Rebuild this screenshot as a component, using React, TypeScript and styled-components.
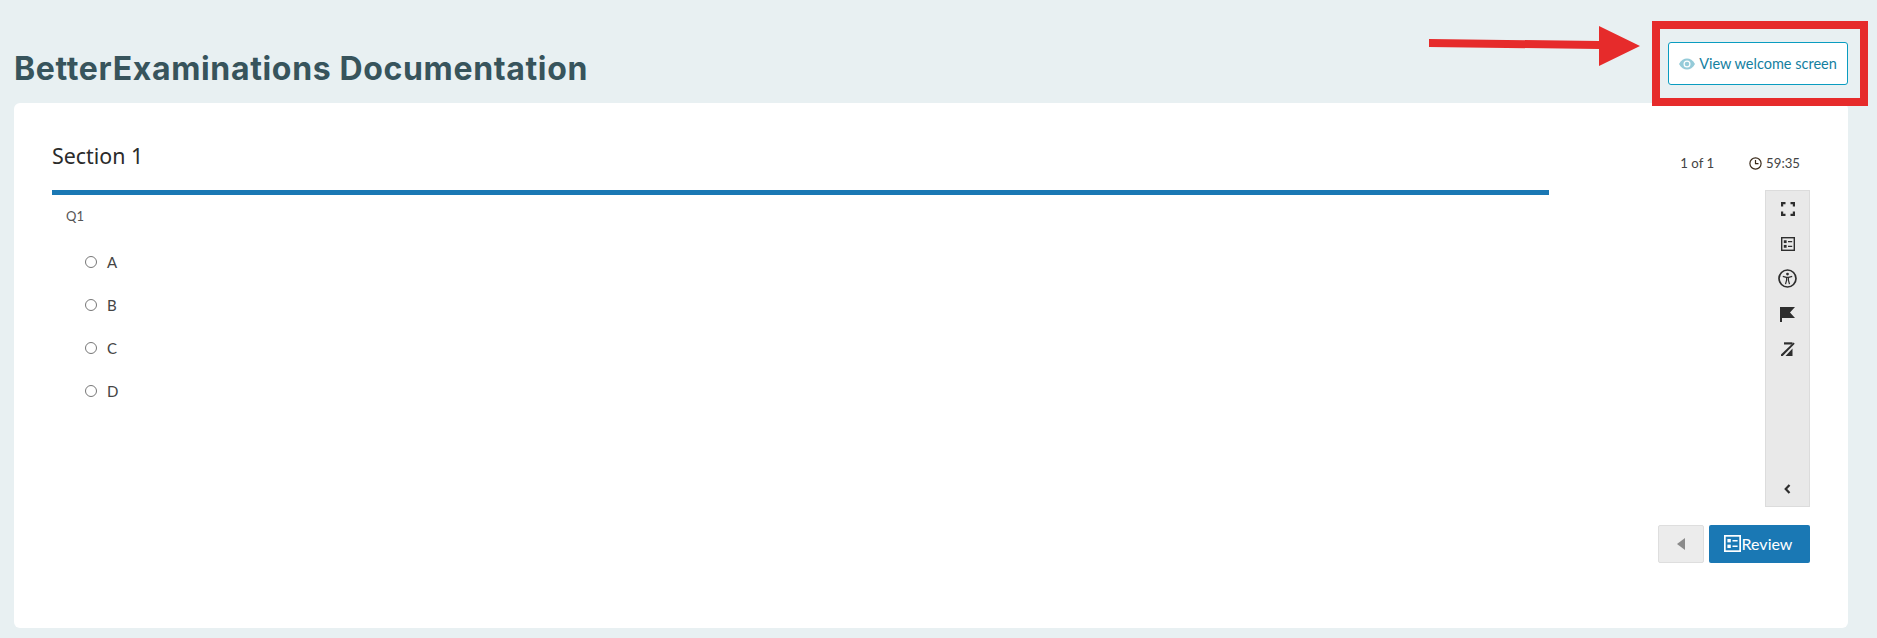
import React from 'react';
import styled, { createGlobalStyle } from 'styled-components';

// STYLES
const GlobalStyle = createGlobalStyle`
  html, body {
    margin: 0;
    padding: 0;
    background: #e8f0f2;
  }
  * {
    box-sizing: border-box;
  }
`;

const Page = styled.div`
  position: relative;
  width: 1877px;
  height: 638px;
  overflow: hidden;
  background: #e8f0f2;
  font-family: 'Lato', sans-serif;
  color: #444;
`;

const Header = styled.header`
  height: 103px;
  padding: 42px 29px 0 14px;
  display: flex;
  justify-content: space-between;
  align-items: flex-start;
`;

const Title = styled.h1`
  margin: 9px 0 0;
  font-family: 'Inter', sans-serif;
  font-size: 32px;
  line-height: 36px;
  font-weight: 700;
  letter-spacing: 0.65px;
  color: #37545c;
`;

const WelcomeButton = styled.button`
  width: 180px;
  height: 43px;
  display: flex;
  align-items: center;
  justify-content: center;
  gap: 4px;
  background: #fff;
  border: 1px solid #0a9cc0;
  border-radius: 3px;
  color: #14809f;
  font-family: 'Lato', sans-serif;
  font-size: 14.5px;
`;

const Card = styled.main`
  height: 525px;
  margin: 0 29px 0 14px;
  padding: 40px 38px 0;
  background: #fff;
  border-radius: 6px;
  display: flex;
  justify-content: space-between;
`;

const Exam = styled.section`
  width: 1497px;
`;

const SectionTitle = styled.h2`
  margin: 0;
  height: 52px;
  font-family: 'Noto Sans', sans-serif;
  font-size: 21.4px;
  line-height: 26px;
  font-weight: 400;
  color: #2b2b2b;
  border-bottom: 5px solid #1a78b4;
`;

const Question = styled.p`
  margin: 0;
  padding: 13px 0 0 14px;
  font-size: 13px;
  line-height: 16px;
  color: #555;
`;

const Options = styled.div`
  margin-top: 16px;
  padding-left: 33px;
  display: flex;
  flex-direction: column;
`;

const Option = styled.label`
  height: 43px;
  display: flex;
  align-items: center;
  gap: 9px;
  font-size: 15px;
`;

const Radio = styled.span`
  width: 12px;
  height: 12px;
  margin-right: 1px;
  border: 1px solid #777;
  border-radius: 50%;
`;

const Side = styled.aside`
  width: 145px;
  display: flex;
  flex-direction: column;
  align-items: flex-end;
`;

const Status = styled.div`
  height: 47px;
  padding-top: 12px;
  display: flex;
  align-items: flex-start;
  gap: 35px;
  font-size: 13.2px;
  line-height: 16px;
  margin-right: 10px;
`;

const Timer = styled.span`
  display: flex;
  align-items: center;
  gap: 4px;
`;

const Toolbar = styled.div`
  width: 45px;
  height: 317px;
  padding: 0 0 8px;
  display: flex;
  flex-direction: column;
  align-items: center;
  background: #e9e9e9;
  border: 1px solid #dcdcdc;
`;

const ToolSlot = styled.div`
  height: 35px;
  width: 100%;
  flex: none;
  display: flex;
  align-items: center;
  justify-content: center;
  color: #2e2e2e;
`;

const Collapse = styled(ToolSlot)`
  margin-top: auto;
  height: 20px;
  padding-top: 2px;
`;

const FlagSlot = styled(ToolSlot)`
  padding-top: 2px;
`;

const Nav = styled.div`
  margin-top: 18px;
  display: flex;
  gap: 5px;
`;

const BackButton = styled.button`
  width: 46px;
  height: 38px;
  display: flex;
  align-items: center;
  justify-content: center;
  padding: 0;
  background: #ececec;
  border: 1px solid #dedede;
  border-radius: 2px;
`;

const ReviewButton = styled.button`
  width: 101px;
  height: 38px;
  display: flex;
  align-items: center;
  justify-content: center;
  gap: 1px;
  padding: 0 3px 1px 0;
  background: #1a78b4;
  border: none;
  border-radius: 2px;
  color: #fff;
  font-family: 'Lato', sans-serif;
  font-size: 16px;
`;

// callout drawn over the screenshot
const CalloutBox = styled.div`
  position: absolute;
  left: 1652px;
  top: 21px;
  width: 216px;
  height: 85px;
  border: 8px solid #e62b2b;
`;

const CalloutArrow = styled.svg`
  position: absolute;
  left: 1428px;
  top: 24px;
`;

// ICONS
const EyeIcon = () => (
  <svg width="16" height="12" viewBox="0 0 16 12">
    <path d="M0 6C2 2.2 5 .5 8 .5S14 2.2 16 6c-2 3.8-5 5.5-8 5.5S2 9.800 0 6z" fill="#95cbd9" />
    <circle cx="8" cy="6" r="3.500" fill="#fff" />
    <circle cx="8" cy="6" r="2.300" fill="#95cbd9" />
  </svg>
);

const ClockIcon = () => (
  <svg width="13" height="13" viewBox="0 0 13 13" fill="none" stroke="#3a2a1a" strokeWidth="1.200">
    <circle cx="6.500" cy="6.500" r="5.600" />
    <path d="M6.500 3v3.700h3" />
  </svg>
);

const FullscreenIcon = () => (
  <svg width="14" height="14" viewBox="0 0 14 14" fill="none" stroke="currentColor" strokeWidth="2.200">
    <path d="M1.100 4.500V1.100H4.500M9.500 1.100h3.400V4.500M12.900 9.500v3.400H9.500M4.500 12.900H1.100V9.500" />
  </svg>
);

const ListIcon = ({ size = 14, color = 'currentColor' }: { size?: number; color?: string }) => (
  <svg width={size} height={size} viewBox="0 0 15 15" fill="none" stroke={color}>
    <rect x="0.750" y="0.750" width="13.500" height="13.500" strokeWidth="1.500" />
    <rect x="3" y="3.500" width="3" height="3" fill={color} stroke="none" />
    <rect x="3" y="8.500" width="3" height="3" fill={color} stroke="none" />
    <path d="M7.500 5h4.500M7.500 10h4.500" strokeWidth="1.300" />
  </svg>
);

const AccessIcon = () => (
  <svg width="19" height="19" viewBox="0 0 19 19" fill="none" stroke="currentColor">
    <circle cx="9.500" cy="9.500" r="8.500" strokeWidth="1.700" />
    <circle cx="9.500" cy="5.100" r="1.400" fill="currentColor" stroke="none" />
    <path d="M4.800 7.300l3.600 1h2.200l3.600-1" strokeWidth="1.200" />
    <path d="M8.600 8.300v2.900l-1.100 3.900M10.400 8.300v2.900l1.100 3.900" strokeWidth="1.200" />
  </svg>
);

const FlagIcon = () => (
  <svg width="15" height="15" viewBox="0 0 15 15" fill="currentColor">
    <path d="M0 0h15l-5 5.500 5 5.500H2v4H0z" />
  </svg>
);

const HighlightOffIcon = () => (
  <svg width="14" height="14" viewBox="0 0 14 14" fill="currentColor">
    <path d="M3 .3h8.500v2.200H3z" />
    <path d="M12.500 .5l1.200 1.200L1.700 14H0v-1.400z" />
    <path d="M4.500 14l7-7.500V14z" />
  </svg>
);

const ChevronIcon = () => (
  <svg width="7" height="10" viewBox="0 0 7 10" fill="none" stroke="currentColor" strokeWidth="2.200">
    <path d="M5.500 1L1.700 5l3.800 4" />
  </svg>
);

const BackIcon = () => (
  <svg width="8" height="12" viewBox="0 0 8 12" fill="#8a8a8a">
    <path d="M8 0v12L0 6z" />
  </svg>
);

// COMPONENT
const OPTIONS = ['A', 'B', 'C', 'D'];

const App: React.FC = () => (
  <Page>
    <GlobalStyle />
    <Header>
      <Title>BetterExaminations Documentation</Title>
      <WelcomeButton>
        <EyeIcon />
        View welcome screen
      </WelcomeButton>
    </Header>

    <Card>
      <Exam>
        <SectionTitle>Section 1</SectionTitle>
        <Question>Q1</Question>
        <Options>
          {OPTIONS.map((option) => (
            <Option key={option}>
              <Radio />
              {option}
            </Option>
          ))}
        </Options>
      </Exam>

      <Side>
        <Status>
          <span>1 of 1</span>
          <Timer>
            <ClockIcon />
            59:35
          </Timer>
        </Status>
        <Toolbar>
          <ToolSlot><FullscreenIcon /></ToolSlot>
          <ToolSlot><ListIcon /></ToolSlot>
          <ToolSlot><AccessIcon /></ToolSlot>
          <FlagSlot><FlagIcon /></FlagSlot>
          <ToolSlot><HighlightOffIcon /></ToolSlot>
          <Collapse><ChevronIcon /></Collapse>
        </Toolbar>
        <Nav>
          <BackButton><BackIcon /></BackButton>
          <ReviewButton>
            <ListIcon size={17} color="#fff" />
            Review
          </ReviewButton>
        </Nav>
      </Side>
    </Card>

    <CalloutBox />
    <CalloutArrow width="214" height="44" viewBox="0 0 214 44">
      <path d="M1 15l170 2V2l41 20-41 20V25L1 23z" fill="#e62b2b" />
    </CalloutArrow>
  </Page>
);

export default App;
